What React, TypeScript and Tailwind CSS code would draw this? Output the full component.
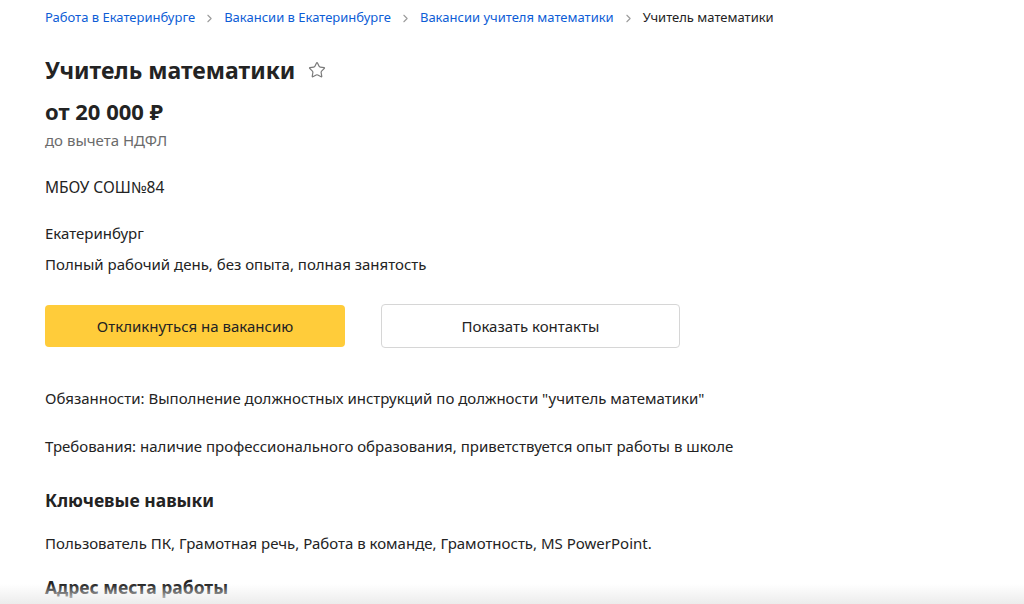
import { ChevronRight, Star } from "lucide-react";

const crumbs = [
  "Работа в Екатеринбурге",
  "Вакансии в Екатеринбурге",
  "Вакансии учителя математики",
];

export default function App() {
  return (
    <div
      className="relative w-[1024px] h-[604px] overflow-hidden bg-white text-[#232323]"
      style={{ fontFamily: '"Noto Sans", "Open Sans", sans-serif' }}
    >
      <div className="pl-[45px] pt-[8px]">
        {/* Breadcrumbs */}
        <nav className="flex items-center h-[20px] text-[13px]">
          {crumbs.map((c) => (
            <span key={c} className="flex items-center">
              <a className="text-[#0d5dd6]">{c}</a>
              <ChevronRight className="w-[13px] h-[13px] mx-[8px] text-[#9b9b9b]" strokeWidth={2} />
            </span>
          ))}
          <span className="text-[#232323]">Учитель математики</span>
        </nav>

        {/* Title */}
        <div className="flex items-center mt-[27px] h-[30px]">
          <h1 className="text-[23px] font-bold leading-[30px]">Учитель математики</h1>
          <Star className="w-[18px] h-[18px] ml-[13px] text-[#7a7a7a]" strokeWidth={1.6} />
        </div>

        <div className="mt-[13px] text-[22px] font-bold leading-[26px]">от 20 000 ₽</div>
        <div className="mt-[6px] text-[15px] leading-[20px] text-[#6b6b6b]">до вычета НДФЛ</div>

        <div className="mt-[27px] text-[15.5px] leading-[20px]">МБОУ СОШ№84</div>
        <div className="mt-[26px] text-[15px] leading-[20px]">Екатеринбург</div>
        <div className="mt-[11px] text-[15px] leading-[20px]">Полный рабочий день, без опыта, полная занятость</div>

        {/* Buttons */}
        <div className="flex items-center mt-[30px] gap-[36px]">
          <button className="w-[300px] h-[42px] rounded-[4px] bg-[#ffcc3a] text-[15px] text-[#232323]">
            Откликнуться на вакансию
          </button>
          <button className="w-[299px] h-[44px] rounded-[4px] border border-[#d6d6d6] bg-white text-[15px] text-[#232323]">
            Показать контакты
          </button>
        </div>

        <p className="mt-[40px] text-[15px] leading-[20px]">
          Обязанности: Выполнение должностных инструкций по должности "учитель математики"
        </p>
        <p className="mt-[28px] text-[15px] leading-[20px]">
          Требования: наличие профессионального образования, приветствуется опыт работы в школе
        </p>

        <h2 className="mt-[32px] text-[17.5px] font-bold leading-[24px]">Ключевые навыки</h2>
        <p className="mt-[21px] text-[15px] leading-[20px]">
          Пользователь ПК, Грамотная речь, Работа в команде, Грамотность, MS PowerPoint.
        </p>
        <h2 className="mt-[22px] text-[17.5px] font-bold leading-[24px]">Адрес места работы</h2>
      </div>
      <div className="absolute left-0 right-0 bottom-0 h-[20px] bg-gradient-to-b from-transparent to-[#ececec]" />
    </div>
  );
}
